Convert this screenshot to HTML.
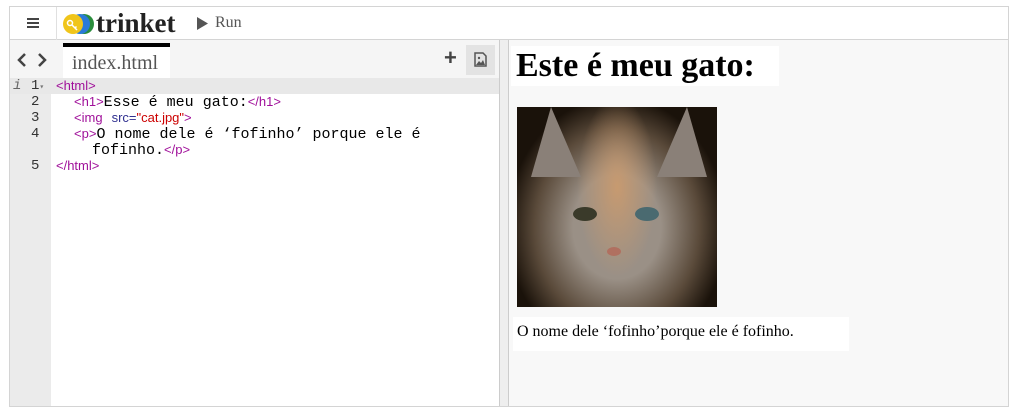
<!DOCTYPE html>
<html><head><meta charset="utf-8"><style>
*{margin:0;padding:0;box-sizing:border-box}
body{width:1017px;height:414px;background:#fff;position:relative;font-family:"Liberation Sans",sans-serif;overflow:hidden}
.frame{position:absolute;left:9px;top:6px;width:1000px;height:401px;border:1px solid #d4d4d4}
.tb{position:absolute;left:0;top:0;width:998px;height:33px;border-bottom:1px solid #d4d4d4;background:#fff}
.menu{position:absolute;left:0;top:0;width:47px;height:33px;border-right:1px solid #e0e0e0}
.menu i{position:absolute;left:17px;width:12px;height:2px;background:#444}
.code{position:absolute;left:0;top:33px;width:489px;height:366px;background:#fff}
.tabs{position:absolute;left:0;top:0;width:489px;height:38px;background:#f5f5f5}
.tab{position:absolute;left:53px;top:3px;width:107px;height:35px;background:#fff;border-top:4px solid #000;font-size:20px;color:#555;font-family:"Liberation Serif",serif;padding:5px 0 0 9px}
.gut{position:absolute;left:0;top:38px;width:41px;height:328px;background:#ebebeb}
.hl{position:absolute;left:0;top:38px;width:489px;height:16px;background:#e8e8e8}
.ln{position:absolute;font:14px "Liberation Mono",monospace;color:#333;line-height:16px}
.cl{position:absolute;left:46px;font:15px "Liberation Mono",monospace;line-height:16px;color:#000;white-space:pre}
.t{color:#a0109a;font-size:13px;font-family:"Liberation Sans",sans-serif}.s{color:#c00;font-size:13px;font-family:"Liberation Sans",sans-serif}.a{color:#303090;font-size:13px;font-family:"Liberation Sans",sans-serif}
.div{position:absolute;left:489px;top:33px;width:10px;height:366px;background:#eee;border-left:1px solid #ccc;border-right:1px solid #ccc}
.out{position:absolute;left:499px;top:33px;width:499px;height:366px;background:#f8f8f8}
</style></head><body>
<div class="frame">
 <div class="tb">
  <div class="menu"><i style="top:11px"></i><i style="top:15px"></i><i style="top:19px"></i></div>
  <svg style="position:absolute;left:52px;top:6px" width="34" height="22"><circle cx="22" cy="11" r="10" fill="#2a8c3c"/><circle cx="18" cy="11" r="10" fill="#2a7ad8"/><circle cx="11" cy="11" r="10" fill="#f0c51a"/><circle cx="8" cy="10" r="2.5" fill="none" stroke="#fff" stroke-width="1.5"/><path d="M10 12l5 5M13 15l1.5-1.5" stroke="#fff" stroke-width="1.5"/></svg>
  <div style="position:absolute;left:86px;top:1px;font:bold 27px 'Liberation Serif',serif;color:#222">trinket</div>
  <svg style="position:absolute;left:187px;top:10px" width="12" height="13"><path d="M0 0L11 6.5L0 13Z" fill="#555"/></svg>
  <div style="position:absolute;left:205px;top:7px;font:16px 'Liberation Serif',serif;color:#555">Run</div>
 </div>
 <div class="code">
  <div class="tabs">
   <svg style="position:absolute;left:6px;top:12px" width="32" height="16"><path d="M9 2L3 8l6 6M23 2l6 6-6 6" fill="none" stroke="#444" stroke-width="2.5"/></svg>
   <div class="tab">index.html</div>
   <div style="position:absolute;left:434px;top:5px;font:bold 22px 'Liberation Sans';color:#444">+</div>
   <div style="position:absolute;left:456px;top:5px;width:29px;height:30px;background:#e3e3e3"><svg style="position:absolute;left:8px;top:7px" width="13" height="15"><path d="M1 1h8l3 3v10H1z" fill="none" stroke="#555" stroke-width="1.5"/><path d="M2 13l3-4 2 2 2-3 2 5z" fill="#555"/><circle cx="5" cy="6" r="1.2" fill="#555"/></svg></div>
  </div>
  <div class="gut"></div>
  <div class="hl"></div>
  <div class="ln" style="left:3px;top:38px;font-style:italic;color:#666">i</div>
  <div class="ln" style="left:21px;top:38px">1<span style="font-size:8px;color:#777">▾</span></div>
  <div class="ln" style="left:21px;top:54px">2</div>
  <div class="ln" style="left:21px;top:70px">3</div>
  <div class="ln" style="left:21px;top:86px">4</div>
  <div class="ln" style="left:21px;top:118px">5</div>
  <div class="cl" style="top:38px"><span class="t">&lt;html&gt;</span></div>
  <div class="cl" style="top:54px">  <span class="t">&lt;h1&gt;</span>Esse é meu gato:<span class="t">&lt;/h1&gt;</span></div>
  <div class="cl" style="top:70px">  <span class="t">&lt;img</span> <span class="a">src=</span><span class="s">"cat.jpg"</span><span class="t">&gt;</span></div>
  <div class="cl" style="top:86px">  <span class="t">&lt;p&gt;</span>O nome dele é ‘fofinho’ porque ele é</div>
  <div class="cl" style="top:102px">    fofinho.<span class="t">&lt;/p&gt;</span></div>
  <div class="cl" style="top:118px"><span class="t">&lt;/html&gt;</span></div>
 </div>
 <div class="div"></div>
 <div class="out">
  <div style="position:absolute;left:2px;top:6px;width:268px;height:40px;background:#fff;font:bold 34px 'Liberation Serif',serif;padding:1px 0 0 5px;color:#000;white-space:nowrap">Este é meu gato:</div>
  <div style="position:absolute;left:8px;top:67px;width:200px;height:200px;background:radial-gradient(ellipse 40px 90px at 100px 80px,#c79a70,transparent),radial-gradient(ellipse 110px 130px at 100px 120px,#9a9086 40%,#5a4a3a 75%,#1a120a 100%)">
   <div style="position:absolute;left:14px;top:0;width:0;height:0;border-left:20px solid transparent;border-right:30px solid transparent;border-bottom:70px solid #8a8078"></div>
   <div style="position:absolute;left:140px;top:0;width:0;height:0;border-left:30px solid transparent;border-right:20px solid transparent;border-bottom:70px solid #8a8078"></div>
   <div style="position:absolute;left:56px;top:100px;width:24px;height:14px;border-radius:50%;background:#3a3a2a"></div>
   <div style="position:absolute;left:118px;top:100px;width:24px;height:14px;border-radius:50%;background:#4a6a70"></div>
   <div style="position:absolute;left:90px;top:140px;width:14px;height:9px;border-radius:50%;background:#b07060"></div>
  </div>
  <div style="position:absolute;left:4px;top:277px;width:336px;height:34px;background:#fff;font:16px 'Liberation Serif',serif;padding:6px 0 0 4px;color:#000;white-space:nowrap">O nome dele ‘fofinho’porque ele é fofinho.</div>
 </div>
</div>
</body></html>
